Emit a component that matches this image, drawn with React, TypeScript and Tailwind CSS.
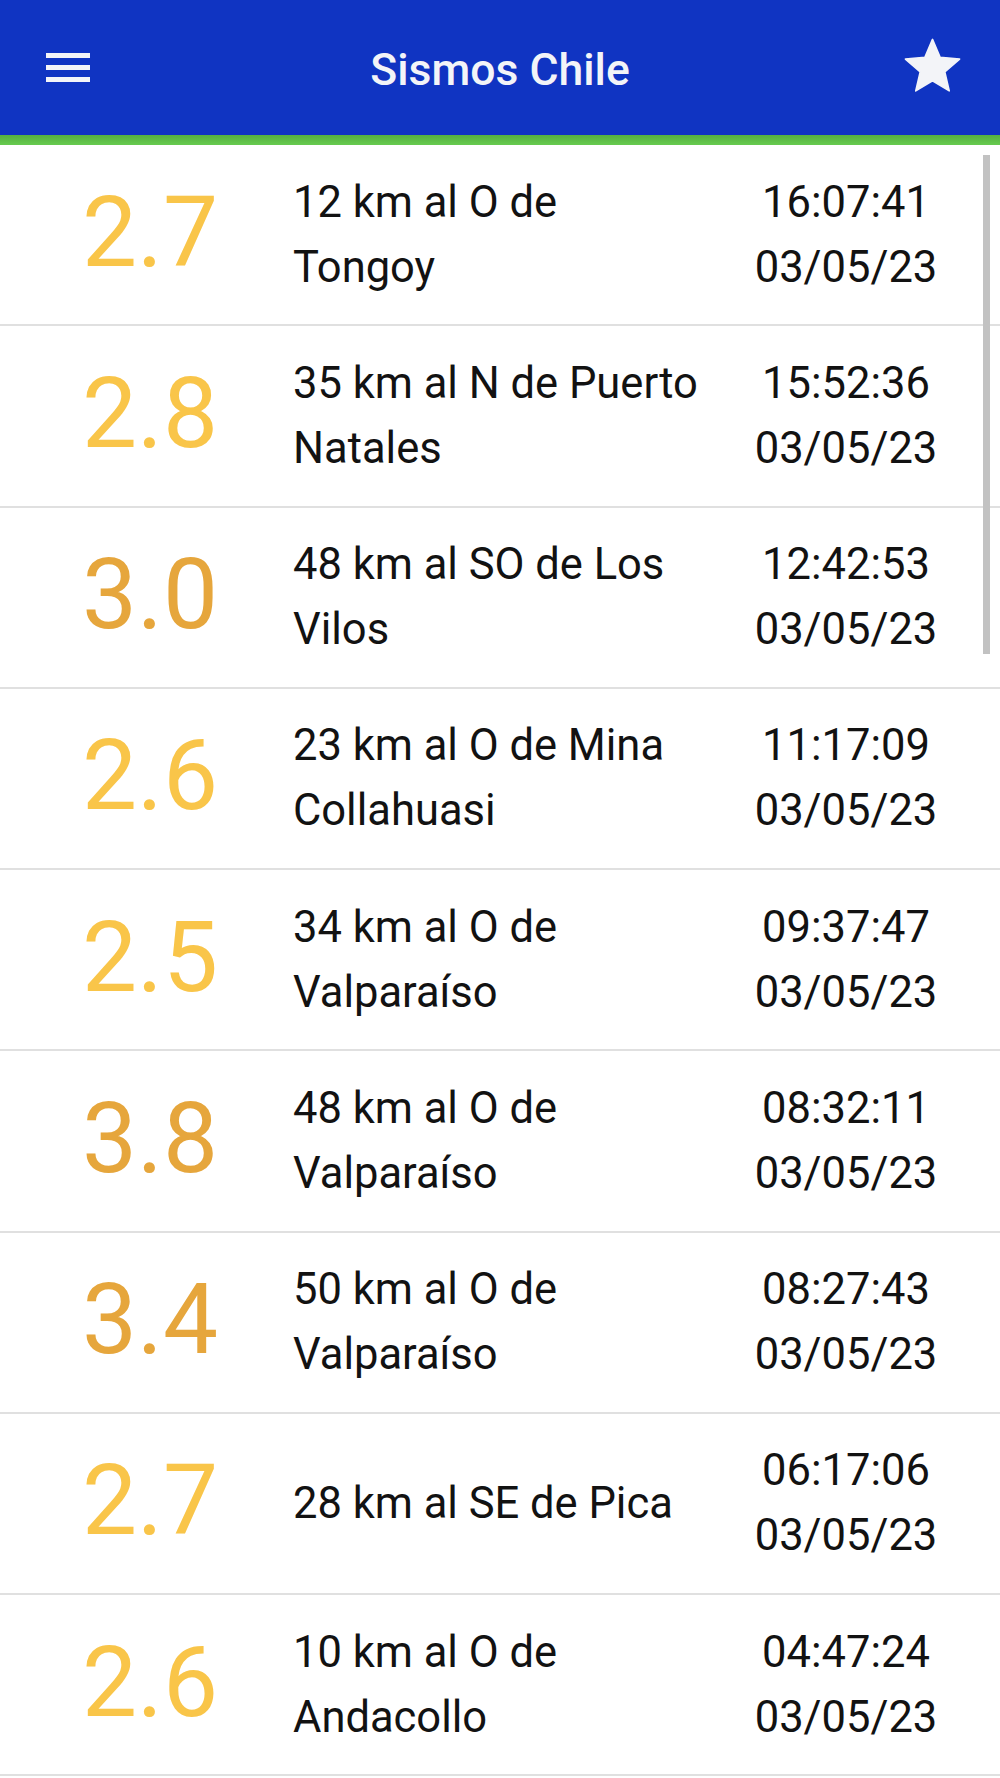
import React from 'react';

type Sismo = { mag: string; place: string; time: string; date: string };

const sismos: Sismo[] = [
  { mag: '2.7', place: '12 km al O de Tongoy', time: '16:07:41', date: '03/05/23' },
  { mag: '2.8', place: '35 km al N de Puerto Natales', time: '15:52:36', date: '03/05/23' },
  { mag: '3.0', place: '48 km al SO de Los Vilos', time: '12:42:53', date: '03/05/23' },
  { mag: '2.6', place: '23 km al O de Mina Collahuasi', time: '11:17:09', date: '03/05/23' },
  { mag: '2.5', place: '34 km al O de Valparaíso', time: '09:37:47', date: '03/05/23' },
  { mag: '3.8', place: '48 km al O de Valparaíso', time: '08:32:11', date: '03/05/23' },
  { mag: '3.4', place: '50 km al O de Valparaíso', time: '08:27:43', date: '03/05/23' },
  { mag: '2.7', place: '28 km al SE de Pica', time: '06:17:06', date: '03/05/23' },
  { mag: '2.6', place: '10 km al O de Andacollo', time: '04:47:24', date: '03/05/23' },
];

const Header = () => (
  <div className="h-[135px] bg-[#1034c2] grid grid-cols-[1fr_auto_1fr] items-center">
    <div className="pl-[46px] flex flex-col gap-[7.5px]">
      <div className="w-[44px] h-[4.5px] bg-[#f3f4f8]" />
      <div className="w-[44px] h-[4.5px] bg-[#f3f4f8]" />
      <div className="w-[44px] h-[4.5px] bg-[#f3f4f8]" />
    </div>
    <div className="text-[44.5px] font-medium text-[#f3f4f8] leading-none pt-[5px]">Sismos Chile</div>
    <div className="flex justify-end pr-[35px]">
      <svg viewBox="0 0 24 24" className="w-[65px] h-[65px] -mt-[3px]" fill="#f3f4f8">
        <path
          d="M12 17.27L18.18 21l-1.64-7.03L22 9.24l-7.19-.61L12 2 9.19 8.63 2 9.24l5.46 4.73L5.82 21z"
          stroke="#f3f4f8"
          strokeWidth="0.6"
          strokeLinejoin="round"
        />
      </svg>
    </div>
  </div>
);

const Row = ({ s }: { s: Sismo }) => {
  const strong = parseFloat(s.mag) >= 3;
  return (
    <div className="h-[181.25px] border-b-2 border-[#e0e0e0] flex items-center">
      <div
        className={
          'w-[293px] pl-[7px] text-center text-[98px] leading-none -mt-[4px] ' +
          (strong ? 'text-[#e6a63c]' : 'text-[#f9c549]')
        }
      >
        {s.mag}
      </div>
      <div className="w-[410px] text-[43.5px] leading-[65px] text-[#121212]">{s.place}</div>
      <div className="w-[286px] text-center text-[43.5px] leading-[65px] text-[#121212]">
        <div>{s.time}</div>
        <div>{s.date}</div>
      </div>
    </div>
  );
};

export default function App() {
  return (
    <div className="relative w-[1000px] h-[1778px] bg-white overflow-hidden" style={{ fontFamily: 'Roboto, "Noto Sans", sans-serif' }}>
      <Header />
      <div className="h-[10px] bg-gradient-to-b from-[#55b03f] to-[#67cb4f]" />
      <div>
        {sismos.map((s, i) => (
          <Row key={i} s={s} />
        ))}
      </div>
      <div className="absolute left-[983px] top-[155px] w-[7px] h-[499px] bg-[#c2c2c2]" />
    </div>
  );
}
